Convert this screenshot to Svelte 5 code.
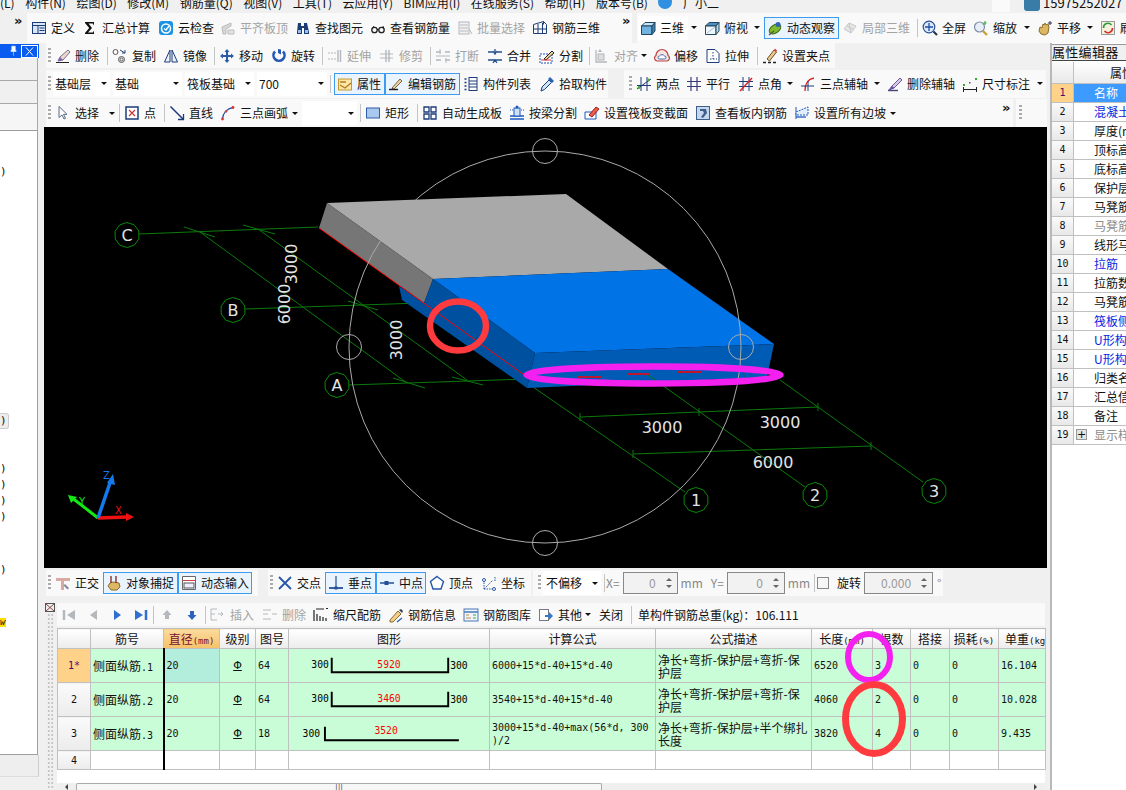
<script lang="ts">
	type Item = { i?: string; t?: string; w?: number; off?: boolean; drop?: boolean; on?: boolean; sep?: boolean; combo?: boolean; grip?: boolean };

	// toolbar entry helpers, w is the slot width of the button
	const b = (i: string, t: string, w: number, flags = ''): Item => ({
		i, t, w,
		off: flags.includes('g'),
		drop: flags.includes('d'),
		on: flags.includes('a')
	});
	const sep: Item = { sep: true };
	const grip: Item = { grip: true };
	const combo = (t: string, w: number): Item => ({ t, w, combo: true });

	const N = '#1c3c78';
	const G = '#b4b8bc';
	const icons: Record<string, string> = {
		define: `<rect x="1.5" y="2.5" width="13" height="11" fill="#d8e6f6" stroke="${N}"/><path d="M1.5 5.5h13M7 5.5v8M8.5 8h5M8.5 10.500h5" stroke="${N}" fill="none"/>`,
		sigma: `<path d="M3 2h9v3.500l-1.200-2H6.500l3.500 4.500-4 4.500h5l1-2V14H3v-1l4.200-5L3 3z" fill="#111"/>`,
		cloud: `<rect x="1" y="1" width="14" height="14" rx="3" fill="#1c92e4"/><circle cx="8" cy="8.500" r="4.500" fill="none" stroke="#fff" stroke-width="1.500"/><path d="M6 8.500l2 1.500 3-4" stroke="#fff" stroke-width="1.300" fill="none"/>`,
		flat: `<path d="M2 7l9-4v3l-5 3v5H3z" fill="#d6d8d8" stroke="#bbb"/><path d="M8 10h6v4H8z" fill="#e3e3e3" stroke="#bbb"/>`,
		binoc: `<path d="M3 3h3v3h3V3h3l2 9v2h-5V8H7v6H2v-2z" fill="${N}"/><rect x="3" y="10" width="3" height="3" fill="#9cc0ea"/><rect x="10" y="10" width="3" height="3" fill="#9cc0ea"/>`,
		glasses: `<circle cx="4.500" cy="10" r="2.700" fill="none" stroke="#222" stroke-width="1.300"/><circle cx="11.500" cy="10" r="2.700" fill="none" stroke="#222" stroke-width="1.300"/><path d="M7 9.500h2M2 9l2-3M14 9l-1-3" stroke="#222"/>`,
		batch: `<rect x="2" y="2" width="10" height="12" fill="#f2f2f2" stroke="${G}"/><path d="M3 5h8M3 8h8M3 11h8M12 9l3 5" stroke="${G}"/>`,
		rebar: `<path d="M1.500 4.500l10-3 3 3v9h-13zM1.500 9h13M6 4v10M10.500 3v11M11.500 1.500v3" fill="none" stroke="${N}"/>`,
		cube: `<path d="M1.500 6L5 2.500h10L12 6z" fill="#c8e2f5" stroke="#23465c"/><path d="M1.500 6H12v8.500H1.500z" fill="#70b2e0" stroke="#23465c"/><path d="M12 6l3-3.500v8.500L12 14.500z" fill="#3d86bb" stroke="#23465c"/>`,
		top: `<path d="M1.500 6L5 2.500h10L12 6z" fill="#4d8fc2" stroke="#23465c"/><path d="M1.500 6H12v8.500H1.500z" fill="#eef6fb" stroke="#23465c"/><path d="M12 6l3-3.500v8.500L12 14.500z" fill="#bcd9ea" stroke="#23465c"/><path d="M3 13l8-6" stroke="#9cc4de"/>`,
		orbit: `<ellipse cx="8" cy="9" rx="6.500" ry="4" fill="#7fba2c" stroke="#39701a" transform="rotate(-35 8 9)"/><circle cx="11" cy="4.500" r="2.500" fill="#2f62b8"/><path d="M2 15l5-4" stroke="#555" stroke-width="1.500"/>`,
		local: `<path d="M2 9l5-6 7 3-5 7z" fill="#e6e6e6" stroke="#c8c8c8"/><path d="M5 6l6 3M7 3l2 10" stroke="#c8c8c8"/>`,
		full: `<circle cx="7" cy="7" r="5.800" fill="#dce9f8" stroke="#2a4f94" stroke-width="1.200"/><path d="M7 3v8M3 7h8" stroke="#1d4fa8" stroke-width="1.300"/><path d="M11.500 11.500l3.500 3.500" stroke="#234" stroke-width="2"/>`,
		zoom: `<circle cx="6.500" cy="7" r="5" fill="#e8eef8" stroke="#7d8ea8" stroke-width="1.200"/><path d="M10 11l4 4" stroke="#c9a137" stroke-width="2.400"/><path d="M12 1v4M10.500 3h3" stroke="#3a3" />`,
		pan: `<path d="M2 11l1-4 2 1 1-4 1 1 1-2 1 2 2-1 1 3-1 6-3 2-4-1z" fill="#dcb865" stroke="#8a6c28"/><path d="M11 3h4M13 1v4" stroke="#334"/>`,
		refresh: `<rect x="1.500" y="1.500" width="13" height="13" fill="#f4f0dc" stroke="#999"/><path d="M3.500 8a4.500 4.500 0 0 1 8-3" fill="none" stroke="#2a9a3a" stroke-width="1.600"/><path d="M12.500 8a4.500 4.500 0 0 1-8 3" fill="none" stroke="#d4332a" stroke-width="1.600"/>`,
		erase: `<path d="M1 14.500h13" stroke="#222"/><path d="M3 13l2-4 8-7 2 2-7 8z" fill="#e9d9c7" stroke="#7a6a9a"/><path d="M3 13l2-4 3 3z" fill="#7863ac"/>`,
		copy: `<circle cx="3.500" cy="4" r="2.500" fill="none" stroke="#555"/><circle cx="9.500" cy="11.500" r="3" fill="none" stroke="#555"/><circle cx="9.500" cy="11.500" r="1.500" fill="none" stroke="#555"/><path d="M8 2l5 3M13 2v3h-3" fill="none" stroke="#27467e"/>`,
		mirror: `<path d="M7 2L1.500 14H7zM9 2l5.500 12H9z" fill="#eef3fa" stroke="${N}"/>`,
		move: `<path d="M8 1l2.500 3H9v3h3V5.500L15 8l-3 2.500V9H9v3h1.500L8 15l-2.500-3H7V9H4v1.500L1 8l3-2.500V7h3V4H5.500z" fill="#2a5ca8"/>`,
		rotate: `<path d="M4 3.500a5.500 5.500 0 1 0 8 0" fill="none" stroke="#2458b4" stroke-width="2.600"/><path d="M7 1l3 .5v5L7 5z" fill="#2458b4"/>`,
		extend: `<path d="M1 5h8M1 11h8" stroke="${G}" stroke-dasharray="2 1"/><path d="M11 2v12M13.500 2v12" stroke="${G}" stroke-width="1.400"/>`,
		trim: `<path d="M1 6h13M1 10h13" stroke="${G}"/><path d="M7 2v12M10 2v12" stroke="${G}" stroke-width="1.400"/>`,
		breaks: `<path d="M1 4h5M10 4h5M1 12h5M10 12h5" stroke="${G}" stroke-width="1.400"/><path d="M5 1v5M11 10v5M1 8h14" stroke="${G}"/>`,
		merge: `<path d="M1 4h5M10 4h5M1 12h14M8 1v5M6 3l2 3 2-3M6 15l2-3 2 3" stroke="#26508a" stroke-width="1.300" fill="none"/>`,
		split: `<path d="M1 6h12v9H1z" fill="#fff" stroke="#2050c0" stroke-dasharray="2 1"/><path d="M5 11l8-8 2 2-8 7z" fill="#e8cf9a" stroke="#222"/><path d="M2 12l10 0" stroke="#d33"/>`,
		align: `<path d="M2 2v12h11" fill="none" stroke="${G}" stroke-width="1.300"/><rect x="4" y="6" width="6" height="6" fill="#ddd" stroke="${G}"/><path d="M6 1l-2 3h4z" fill="${G}"/>`,
		offset: `<path d="M3 13a3 3 0 0 1-1-5.500 6 6 0 0 1 12 0 3 3 0 0 1-1 5.500z" fill="#f6e6e2" stroke="#b44" stroke-width="1.200"/><path d="M5.500 11a1.500 1.500 0 0 1 0-3 3 3 0 0 1 5 0 1.500 1.500 0 0 1 0 3z" fill="#fff" stroke="#46a"/>`,
		stretch: `<path d="M2 1.500h8l4 4v9H2z" fill="#fff" stroke="${N}"/><path d="M8 4v7M5 11h7" stroke="${N}" stroke-dasharray="1.500 1.500"/>`,
		pgrip: `<path d="M1 14.500h3M6 14.500h3M11 14.500h3" stroke="#222" stroke-width="1.400"/><path d="M5 11l7-9 2.500 2-7 9z" fill="#eac98a" stroke="#6a5030"/><path d="M12 2l2.500 2 .5-1.500-2-2z" fill="#d44"/>`,
		prop: `<rect x="1.500" y="3" width="13" height="11" fill="#fbe6a8" stroke="#c59a35"/><path d="M3 6h6M3 9l5 3 6-5" fill="none" stroke="#b8781a" stroke-width="1.300"/>`,
		edit: `<path d="M1 13.500h9" stroke="#111" stroke-width="1.400"/><path d="M4 12l8-9 2 2-8 8z" fill="#e9d5a9" stroke="#7a6040"/><path d="M4 12l-1 2 3-1z" fill="#335"/>`,
		list: `<path d="M1.500 3h2M1.500 6.500h2M1.500 10h2M1.500 13.500h2" stroke="${N}" stroke-width="1.400"/><rect x="6" y="1.500" width="8" height="13" fill="#fff" stroke="${N}"/><path d="M6 5h8M6 8h8M6 11h8" stroke="${N}"/>`,
		pick: `<path d="M2 15l1-4 7-7 2.500 2.500-7 7z" fill="#cfe3f6" stroke="${N}"/><path d="M9 3l2-2 4 4-2 2z" fill="#2a62b8"/>`,
		twopt: `<path d="M5 1v14M11 1v14M1 13L15 3" stroke="${N}"/><path d="M1 9.500h14" stroke="${N}"/><circle cx="3" cy="11.500" r="1.400" fill="#4a3"/><circle cx="12.500" cy="4" r="1.400" fill="#4a3"/>`,
		parallel: `<path d="M5 1v14M11 1v14M1 5.500h14M1 10.500h14" stroke="#3a3a7a" stroke-width="1.200"/>`,
		angle: `<path d="M5 1v14M11 1v14M1 5.500h14M1 10.500h14" stroke="${N}"/><path d="M2 15L14 2" stroke="#d22" stroke-width="1.400"/>`,
		arc3: `<path d="M5 15C5 7 8 3 14 2" fill="none" stroke="#d22" stroke-width="1.300"/><path d="M8 5v10M1 10h13" stroke="${N}"/>`,
		delaxis: `<path d="M1 14.500h10" stroke="#447" stroke-width="1.400"/><path d="M2 14l3-4 8-8 2 2-8 8z" fill="#d8c7e8" stroke="#6a5a9a"/><path d="M2 14l3-4 2.500 2z" fill="#6a4fa8"/>`,
		dim: `<path d="M1 13.500h14M1.500 11v5M14.500 11v5" stroke="#222"/><rect x="1" y="8" width="2" height="2" fill="#3a3"/><rect x="13" y="2" width="2" height="2" fill="#3a3"/><rect x="7" y="6" width="1.500" height="1.500" fill="#555"/>`,
		select: `<path d="M4 1.500v11l3-2.500 2 4 1.500-.7-2-4H12z" fill="#fff" stroke="#5a6a86"/>`,
		point: `<rect x="2" y="2" width="12" height="12" fill="#fff" stroke="${N}" stroke-width="1.500"/><path d="M5 5l6 6M11 5l-6 6" stroke="#c33" stroke-width="1.200"/>`,
		line: `<path d="M1.500 1.500L14 14" stroke="${N}" stroke-width="1.500"/><path d="M14.500 9v5.500H9" fill="none" stroke="${N}" stroke-width="1.300"/>`,
		arc: `<path d="M2.500 14C3 8 7 3.500 13 2.500" fill="none" stroke="#2050a8" stroke-width="1.300"/><circle cx="2.500" cy="14" r="1.400" fill="#d33"/><circle cx="13" cy="2.500" r="1.400" fill="#d33"/><circle cx="6" cy="6.500" r="1.200" fill="#d33"/>`,
		rect: `<rect x="1.500" y="3" width="13" height="10" fill="#a9c8f0" stroke="#2f5ca8"/>`,
		auto: `<path d="M2 2h5v5H2zM9 2h5v5H9zM2 9h5v5H2zM9 9h5v5H9z" fill="#fff" stroke="${N}" stroke-width="1.300"/>`,
		beam: `<path d="M1 11h14M1 14h14" stroke="#1c58c0" stroke-width="1.500"/><rect x="5" y="3" width="6" height="8" fill="#cfe0f8" stroke="#1c58c0"/><circle cx="8" cy="2" r="1.500" fill="#1c58c0"/><path d="M1 5h3M12 5h3" stroke="#1c58c0" stroke-dasharray="1 1"/>`,
		section: `<path d="M1 7h11v7H1z" fill="#fff" stroke="#1c58c0"/><path d="M5 10l7-8 3 2-7 8z" fill="#ec5a4a" stroke="#922"/>`,
		viewin: `<rect x="1.500" y="1.500" width="13" height="13" fill="#c6d8ee" stroke="#3d5f8e"/><path d="M5 4h6l1 4-4 5-2-1 3-4-1-2H5z" fill="#3d5f8e"/>`,
		slope: `<path d="M2 2v12" stroke="#1c58c0"/><path d="M2 7l12-5v8H2z" fill="#e4eefb" stroke="#1c58c0" stroke-dasharray="2 1"/><path d="M2 12h10" stroke="#1c58c0" stroke-width="1.300"/>`,
		ortho: `<path d="M1 3h14v3H9v9H6V6H1z" fill="#d9a9a4"/><path d="M10 9l4 4-1.500 1.500-4-4z" fill="#889"/>`,
		snap: `<path d="M2 11l2-3 3-1 6 1 1 4-3 3H5z" fill="#dcb865" stroke="#8a6c28"/><path d="M5 1v7M10 1v7" stroke="#8a3030" stroke-width="1.400"/>`,
		dyn: `<path d="M1.500 1.500h13v13h-13z" fill="#fff" stroke="#666"/><path d="M1.500 5.500h13" stroke="#c44"/><rect x="3" y="8" width="10" height="5" fill="#eef" stroke="#555"/>`,
		cross: `<path d="M2 2l12 12M14 2L2 14" stroke="#2458a8" stroke-width="1.800"/>`,
		perp: `<path d="M1 13h14" stroke="#244f98" stroke-width="1.800"/><path d="M8 1v12" stroke="#244f98" stroke-width="1.200"/><rect x="6.500" y="11.500" width="3" height="3" fill="#244f98"/>`,
		mid: `<path d="M1 8h14" stroke="#244f98" stroke-width="1.500"/><rect x="5.500" y="6" width="4" height="4" fill="#244f98"/>`,
		vertex: `<path d="M8 1.500l6.500 5-2.500 7.500H4L1.500 6.500z" fill="#fff" stroke="#2458a8" stroke-width="1.400"/>`,
		coord: `<path d="M3 14V6M3 14h9M3 14l9-9M14 2v5" stroke="#2458a8" stroke-dasharray="1.500 1"/><circle cx="3" cy="5" r="1.500" fill="#fff" stroke="#2458a8"/><circle cx="13" cy="14" r="1.500" fill="#fff" stroke="#2458a8"/>`,
		first: `<path d="M3 3v10" stroke="${G}" stroke-width="2.500"/><path d="M14 3v10L6 8z" fill="${G}"/>`,
		prev: `<path d="M12 3v10L5 8z" fill="${G}"/>`,
		next: `<path d="M5 3v10l7-5z" fill="#2e6fd0"/>`,
		last: `<path d="M2 3v10l8-5z" fill="#2e6fd0"/><path d="M13 3v10" stroke="#2e6fd0" stroke-width="2.500"/>`,
		up: `<path d="M8 3l4.500 5H10v4H6V8H3.500z" fill="${G}"/>`,
		down: `<path d="M8 13l4.500-5H10V4H6v4H3.500z" fill="#2e62c0"/>`,
		insert: `<path d="M1 2h6M1 7h4M1 13h6M1 2v11" stroke="${G}"/><path d="M8 7h5M11 5l2 2-2 2" fill="none" stroke="${G}"/>`,
		remove: `<path d="M1 3h8M1 7h5M1 12h8" stroke="${G}"/><path d="M10 7h5" stroke="${G}"/>`,
		scale: `<path d="M1 3v11M4 7v7M7 9v5M10 10v4M13 11v3" stroke="#222" stroke-width="1.200"/><path d="M3 2h8M13 1.500h2" stroke="#222"/>`,
		info: `<path d="M2 13l8-9 3 3-8 8H2z" fill="#f2cf88" stroke="#8a6a30"/><path d="M11 3l2-1 2 2-1 2z" fill="#345"/><path d="M9 15l5-4" stroke="#2a62b8" stroke-width="1.400"/>`,
		lib: `<rect x="1" y="2" width="14" height="12" fill="#eef4fb" stroke="#4878b8"/><path d="M1 5h14" stroke="#4878b8" stroke-width="1.500"/><path d="M3 8h3M3 11h5" stroke="#c84"/><path d="M10 8h3M10 11h3" stroke="#4a4"/>`,
		other: `<rect x="1.500" y="2.500" width="9" height="11" fill="#fff" stroke="#778"/><path d="M7 8h4V5l4 4-4 4v-3H7z" fill="#2e78d0"/>`
	};

	const row1a: Item[] = [
		b('define', '定义', 51), b('sigma', '汇总计算', 76), b('cloud', '云检查', 62), b('flat', '平齐板顶', 75, 'g'),
		b('binoc', '查找图元', 75), b('glasses', '查看钢筋量', 87), b('batch', '批量选择', 75, 'g'), b('rebar', '钢筋三维', 75)
	];
	const row1b: Item[] = [
		b('cube', '三维', 64, 'd'), b('top', '俯视', 63, 'd'), b('orbit', '动态观察', 75, 'a'), b('local', '局部三维', 78, 'g'), sep,
		b('full', '全屏', 51), b('zoom', '缩放', 64, 'd'), b('pan', '平移', 63, 'd'), b('refresh', '刷新', 29)
	];
	const row2: Item[] = [
		grip, b('erase', '删除', 55), sep, b('copy', '复制', 51), b('mirror', '镜像', 54), sep, b('move', '移动', 52), b('rotate', '旋转', 54), sep,
		b('extend', '延伸', 52, 'g'), b('trim', '修剪', 54, 'g'), sep, b('breaks', '打断', 52, 'g'), b('merge', '合并', 52), b('split', '分割', 53), sep,
		b('align', '对齐', 60, 'gd'), b('offset', '偏移', 51), b('stretch', '拉伸', 55), sep, b('pgrip', '设置夹点', 76)
	];
	const row3a: Item[] = [
		grip, combo('基础层', 57), combo('基础', 69), combo('筏板基础', 69), combo('700', 70), sep,
		b('prop', '属性', 51, 'a'), b('edit', '编辑钢筋', 75, 'a'), b('list', '构件列表', 76), b('pick', '拾取构件', 72)
	];
	const row3b: Item[] = [
		grip, b('twopt', '两点', 50), b('parallel', '平行', 52), b('angle', '点角', 62, 'd'), b('arc3', '三点辅轴', 87, 'd'),
		b('delaxis', '删除辅轴', 75), b('dim', '尺寸标注', 88, 'd')
	];
	const row4: Item[] = [
		grip, b('select', '选择', 67, 'd'), sep, b('point', '点', 43), sep, b('line', '直线', 51), b('arc', '三点画弧', 85, 'd'), combo('', 55), sep,
		b('rect', '矩形', 55), sep, b('auto', '自动生成板', 87), b('beam', '按梁分割', 75), b('section', '设置筏板变截面', 111),
		b('viewin', '查看板内钢筋', 99), b('slope', '设置所有边坡', 109, 'd')
	];
	const snapA: Item[] = [grip, b('ortho', '正交', 51), b('snap', '对象捕捉', 75, 'a'), b('dyn', '动态输入', 74, 'a')];
	const snapB: Item[] = [
		grip, b('cross', '交点', 51), b('perp', '垂点', 51, 'a'), b('mid', '中点', 50, 'a'), b('vertex', '顶点', 52), b('coord', '坐标', 52)
	];
	const nav: Item[] = [
		{ i: 'first', w: 24 }, { i: 'prev', w: 24 }, { i: 'next', w: 24 }, { i: 'last', w: 24 }, sep, { i: 'up', w: 23 }, { i: 'down', w: 27 }, sep,
		b('insert', '插入', 52, 'g'), b('remove', '删除', 51, 'g'), b('scale', '缩尺配筋', 75), b('info', '钢筋信息', 75), b('lib', '钢筋图库', 75),
		b('other', '其他', 60, 'd')
	];

	const menus = ['(L)', '构件(N)', '绘图(D)', '修改(M)', '钢筋量(Q)', '视图(V)', '工具(T)', '云应用(Y)', 'BIM应用(I)', '在线服务(S)', '帮助(H)', '版本号(B)'];

	const props = [
		['名称', ''], ['混凝土强度等级', 'l'], ['厚度(mm)', ''], ['顶标高(m)', ''], ['底标高(m)', ''], ['保护层厚度(mm)', ''], ['马凳筋参数图', ''],
		['马凳筋信息', 'g'], ['线形马凳筋方向', ''], ['拉筋', 'l'], ['拉筋数量计算方式', ''], ['马凳筋数量计算方式', ''], ['筏板侧面纵筋', 'l'],
		['U形构造封边钢筋', 'l'], ['U形构造封边钢筋弯折', 'l'], ['归类名称', ''], ['汇总信息', ''], ['备注', ''], ['显示样式', 'g']
	];

	const rows = [
		{ name: '1', diam: '20', no: '64', len: '5920', f: ['6000+15*d-40+15*d-40'], d: ['净长+弯折-保护层+弯折-保', '护层'], total: '6520', n: '3', w: '16.104' },
		{ name: '2', diam: '20', no: '64', len: '3460', f: ['3540+15*d-40+15*d-40'], d: ['净长+弯折-保护层+弯折-保', '护层'], total: '4060', n: '2', w: '10.028' },
		{ name: '3', diam: '20', no: '18', len: '3520', f: ['3000+15*d-40+max(56*d, 300', ')/2'], d: ['净长+弯折-保护层+半个绑扎', '长度'], total: '3820', n: '4', w: '9.435' }
	];

	// little 10-sided bubble for the axis labels
	function ngon(cx: number, cy: number, r: number) {
		return Array.from({ length: 10 }, (_, k) => {
			const a = (k * Math.PI) / 5 + 0.3;
			return `${(cx + r * Math.cos(a)).toFixed(1)},${(cy + r * Math.sin(a)).toFixed(1)}`;
		}).join(' ');
	}
	const bubbles = [
		['C', 127, 235], ['B', 233, 310], ['A', 337, 385], ['1', 696, 500], ['2', 815, 495], ['3', 934, 491]
	] as [string, number, number][];
	const greenLines = [
		[139, 234, 318, 227], [184, 227, 215, 237], [243, 225, 275, 234], [200, 232, 407, 383], [393, 378, 425, 388],
		[258, 229, 467, 380], [348, 301, 378, 310], [452, 377, 483, 385], [245, 309, 420, 303], [349, 385, 527, 379],
		[580, 417, 818, 407], [633, 454, 871, 446], [520, 378, 685, 492], [780, 380, 923, 482],
		[580, 413, 580, 421], [699, 408, 699, 416], [818, 403, 818, 411], [633, 450, 633, 458], [871, 442, 871, 450]
	];
</script>

{#snippet tool(it: Item)}
	{#if it.sep}
		<span class="sep"></span>
	{:else if it.grip}
		<span class="grip"></span>
	{:else if it.combo}
		<span class="combo" style:width="{it.w}px"><span class="combo-t">{it.t}</span><i class="arrow"></i></span>
	{:else}
		<span class="it" class:on={it.on} class:off={it.off} class:solo={!it.t} style:width="{it.w}px">
			{#if it.i}<svg class="ic" viewBox="0 0 16 16">{@html icons[it.i]}</svg>{/if}
			{#if it.t}<span>{it.t}</span>{/if}
			{#if it.drop}<i class="arrow"></i>{/if}
		</span>
	{/if}
{/snippet}

{#snippet spin(value: string, w: string)}
	<span class="spin {w}"><span class="spin-v">{value}</span><span class="spin-b"><i class="up"></i><i class="dn"></i></span></span>
{/snippet}

<div class="app">
	<div class="menu">
		<div class="menu-in">
			{#each menus as m}<span>{m}</span>{/each}
			<span class="robot"></span>
			<span>广小二</span>
			<span class="chip"></span>
			<span class="user-ic"></span>
			<span class="phone">15975252027</span>
		</div>
	</div>

	<div class="top">
		<span class="more first-more">»</span>
		<div class="bar t1">
			{#each row1a as it}{@render tool(it)}{/each}
		</div>
		<span class="more mid-more">»</span>
		<div class="bar t2">
			<span class="white-back"></span>
			{#each row1b as it}{@render tool(it)}{/each}
		</div>
	</div>

	<div class="main">
		<aside class="left">
			<div class="pane-title">
				<svg class="pin" viewBox="0 0 8 12"><path d="M2 1h4v5h1v1H1V6h1zM4 7v5" fill="#fff" stroke="#fff" stroke-width=".6"/></svg>
				<span class="pane-x"><svg viewBox="0 0 15 11"><path d="M4 1.500l7 8M11 1.500l-7 8" stroke="#fff"/></svg></span>
			</div>
			<div class="pane-row"></div>
			<div class="pane-row"></div>
			<div class="pane-gap"></div>
			<div class="tree">
				<div class="tree-line t-a">)</div>
				<div class="tree-line boxed"><span>)</span></div>
				<div class="tree-line t-b">)</div>
				<div class="tree-line">)</div>
				<div class="tree-line">)</div>
				<div class="tree-line">)</div>
				<div class="tree-line t-c">)</div>
				<div class="tree-line t-d"><span class="flag">w</span></div>
			</div>
			<div class="pane-foot"></div>
		</aside>

		<section class="center">
			<div class="bar r2">
				{#each row2 as it}{@render tool(it)}{/each}
			</div>
			<div class="split r3">
				<div class="bar r3a">{#each row3a as it}{@render tool(it)}{/each}</div>
				<div class="bar r3b">{#each row3b as it}{@render tool(it)}{/each}</div>
			</div>
			<div class="split r4">
				<div class="bar r4a">
					{#each row4 as it}{@render tool(it)}{/each}
					<span class="more end-more">»</span>
				</div>
				<div class="bar r4b"><span class="grip"></span></div>
			</div>

			<svg class="scene" viewBox="44 127 1003 441">
				{#each greenLines as l}
					<line x1={l[0]} y1={l[1]} x2={l[2]} y2={l[3]} stroke="#0b7a0b" />
				{/each}

				<polygon points="327,203 566,194 668,269 433,279" fill="#a9a9a9" />
				<polygon points="327,203 319,228 424,303 433,279" fill="#767676" />
				<polygon points="433,279 668,269 774,344 535,353" fill="#0073e6" />
				<polygon points="433,279 535,353 527,388 402,300 399,286 424,303" fill="#0050a0" />
				<polygon points="535,353 774,344 767,377 527,388" fill="#005bb5" />
				<line x1="319" y1="228" x2="527" y2="377" stroke="#f00" />
				<path d="M577 377h24M628 374h22M678 372h24" stroke="#f00" stroke-width="1.500" />
				<line x1="648" y1="375" x2="805" y2="487" stroke="#0b7a0b" />

				<g fill="none" stroke="#aaa">
					<circle cx="545" cy="347" r="196" />
					<circle cx="545" cy="151" r="12.500" />
					<circle cx="545" cy="543" r="12.500" />
					<circle cx="349" cy="347" r="12.500" />
					<circle cx="741" cy="347" r="12.500" />
				</g>

				{#each bubbles as [t, x, y]}
					<polygon points={ngon(x, y, 12.5)} fill="#000" stroke="#0b8a0b" />
					<text {x} y={y + 6} class="lbl">{t}</text>
				{/each}
				<text x="662" y="433" class="lbl">3000</text>
				<text x="780" y="428" class="lbl">3000</text>
				<text x="773" y="468" class="lbl">6000</text>
				<text class="lbl" transform="translate(297 264) rotate(-90)">3000</text>
				<text class="lbl" transform="translate(290 304) rotate(-90)">6000</text>
				<text class="lbl" transform="translate(402 340) rotate(-90)">3000</text>

				<ellipse cx="458" cy="326" rx="28" ry="24.500" fill="none" stroke="#ff3b3f" stroke-width="6.500" />
				<ellipse cx="653.500" cy="375" rx="127" ry="8.500" fill="none" stroke="#f420f0" stroke-width="6.500" />

				<path d="M98 518L71 497" stroke="#12e812" stroke-width="3" />
				<path d="M68 495l9 2-6 6z" fill="#12e812" />
				<path d="M98 518L127 517" stroke="#f01010" stroke-width="3.500" />
				<path d="M134 517l-8-4v8z" fill="#f01010" />
				<path d="M98 518L111 480" stroke="#1478ee" stroke-width="3.500" />
				<path d="M113 474l-6 9 8 2z" fill="#1478ee" />
				<text x="103" y="479" class="axis" fill="#1478ee">Z</text>
				<text x="79" y="505" class="axis" fill="#12e812">Y</text>
				<text x="115" y="514" class="axis" fill="#f01010">X</text>
			</svg>

			<div class="split snap">
				<div class="bar s-a">{#each snapA as it}{@render tool(it)}{/each}</div>
				<div class="bar s-b">{#each snapB as it}{@render tool(it)}{/each}</div>
				<div class="bar s-c">
					<span class="grip"></span>
					<span class="combo offset-combo"><span class="combo-t">不偏移</span><i class="arrow"></i></span>
					<span class="sep"></span>
					<span class="lab off">X=</span>
					{@render spin('0', 'sp-x')}
					<span class="lab off">mm</span>
					<span class="lab off y-lab">Y=</span>
					{@render spin('0', 'sp-y')}
					<span class="lab off mm2">mm</span>
					<span class="sep"></span>
					<span class="check"></span>
					<span class="lab rot">旋转</span>
					{@render spin('0.000', 'sp-r')}
					<span class="lab off deg">°</span>
				</div>
			</div>

			<div class="lower">
				<div class="side">
					<svg class="side-x" viewBox="0 0 10 9"><rect x=".5" y=".5" width="9" height="8" fill="#eee" stroke="#555"/><path d="M1 1l8 7M9 1L1 8" stroke="#844"/></svg>
					<div class="side-dots"></div>
				</div>
				<div class="panel">
					<div class="bar nav">
						{#each nav as it}{@render tool(it)}{/each}
						<span class="lab close">关闭</span>
						<span class="sep"></span>
						<span class="lab total">单构件钢筋总重(kg)：106.111</span>
					</div>

					<div class="grid-wrap">
						<table class="grid">
							<colgroup>
								{#each [33, 73, 56, 36, 33, 201, 166, 156, 61, 38, 39, 49, 47] as w}<col style:width="{w}px" />{/each}
							</colgroup>
							<thead>
								<tr>
									<th></th><th>筋号</th><th class="hot">直径<small>(mm)</small></th><th>级别</th><th>图号</th><th>图形</th><th>计算公式</th><th>公式描述</th>
									<th>长度<small>(mm)</small></th><th>根数</th><th>搭接</th><th>损耗<small>(%)</small></th><th class="clip">单重<small>(kg)</small></th>
								</tr>
							</thead>
							<tbody>
								{#each rows as r, i}
									<tr class="data">
										<th class="num" class:cur={i === 0}>{r.name}{i === 0 ? '*' : ''}</th>
										<td>侧面纵筋<span class="m">.{r.name}</span></td>
										<td class="m bar-l" class:sel={i === 0}>{r.diam}</td>
										<td class="grade">Φ</td>
										<td class="m">{r.no}</td>
										<td class="shape">
											{#if i < 2}
												<svg viewBox="0 0 200 34">
													<text x="20" y="20">300</text>
													<path d="M41 9v15h120V9" />
													<text x="100" y="20" class="red" text-anchor="middle">{r.len}</text>
													<text x="163" y="21">300</text>
												</svg>
											{:else}
												<svg viewBox="0 0 200 34">
													<text x="11" y="21">300</text>
													<path d="M34 10v14h138" />
													<text x="97" y="17" class="red" text-anchor="middle">{r.len}</text>
												</svg>
											{/if}
										</td>
										<td class="m lines">{#each r.f as l}<div>{l}</div>{/each}</td>
										<td class="lines desc">{#each r.d as l}<div>{l}</div>{/each}</td>
										<td class="m">{r.total}</td>
										<td class="m">{r.n}</td>
										<td class="m">0</td>
										<td class="m">0</td>
										<td class="m">{r.w}</td>
									</tr>
								{/each}
								<tr class="blank">
									<th class="num">4</th><td></td><td class="bar-l"></td><td></td><td></td><td></td><td></td><td></td><td></td><td></td><td></td><td></td><td></td>
								</tr>
							</tbody>
						</table>
						<svg class="marks" viewBox="0 0 988 160">
							<ellipse cx="812" cy="29" rx="21" ry="23" stroke="#f420f0" stroke-width="6" />
							<ellipse cx="817" cy="91" rx="28.500" ry="34.500" stroke="#ff3b3f" stroke-width="7" />
						</svg>
					</div>

					<div class="hscroll">
						<span class="sc-btn"><i class="sc-l"></i></span>
						<span class="sc-thumb">|||</span>
						<i class="sc-r"></i>
					</div>
				</div>
			</div>
		</section>

		<aside class="right">
			<div class="pe-title">属性编辑器</div>
			<div class="pe">
				<div class="pe-row pe-head"><span class="pe-n"></span><span class="pe-l">属性名称</span></div>
				{#each props as p, i}
					<div class="pe-row">
						<span class="pe-n" class:cur={i === 0}>{i + 1}</span>
						<span class="pe-l" class:sel={i === 0} class:link={p[1] === 'l'} class:dim={p[1] === 'g'}>
							{#if i === 18}<i class="plus">+</i>{/if}{p[0]}
						</span>
					</div>
				{/each}
			</div>
		</aside>
	</div>
</div>

<style>
	:global(body) {
		background: #f0f0f0;
	}
	.app {
		width: 1126px;
		height: 790px;
		overflow: hidden;
		background: #f0f0f0;
		font: 12px/16px "Noto Sans CJK SC", "Liberation Sans", sans-serif;
		color: #111;
	}

	.menu {
		height: 13px;
		overflow: hidden;
		white-space: nowrap;
	}
	.menu-in {
		display: flex;
		align-items: center;
		gap: 10.5px;
		margin-top: -6px;
		height: 18px;
	}
	.robot {
		flex: none;
		width: 14px;
		height: 14px;
		border-radius: 50%;
		background: #2f8fe0;
		margin-top: -2px;
	}
	.chip {
		flex: none;
		width: 18px;
		height: 18px;
		background: #fafafa;
		margin-left: auto;
	}
	.user-ic {
		flex: none;
		width: 16px;
		height: 16px;
		background: #3a7ca8;
		border-radius: 3px;
		margin-left: 3px;
	}
	.phone {
		flex: none;
		width: 83px;
		margin-left: -7px;
		font-size: 13px;
	}

	.top {
		display: flex;
		height: 30px;
	}
	.more {
		font: bold 13px/14px "DejaVu Sans", sans-serif;
		color: #111;
	}
	.first-more {
		width: 27px;
		padding: 1px 0 0 14px;
		box-sizing: border-box;
	}
	.mid-more {
		position: relative;
		width: 0;
		left: -15px;
		top: 1px;
	}

	.bar {
		display: flex;
		align-items: center;
		background: #f9f9f9;
		white-space: nowrap;
	}
	.t1 {
		width: 605px;
		padding-left: 1px;
		padding-bottom: 1px;
		margin-right: 5px;
		box-sizing: border-box;
	}
	.t2 {
		width: 489px;
		padding-bottom: 1px;
		box-sizing: border-box;
		position: relative;
	}
	.white-back {
		position: absolute;
		left: 1px;
		top: 3px;
		width: 50px;
		height: 24px;
		background: #fff;
	}

	.it {
		position: relative;
		display: flex;
		align-items: center;
		flex: none;
		height: 22px;
		padding-left: 3px;
		box-sizing: border-box;
	}
	.it.on {
		padding-left: 2px;
		border: 1px solid #3d9bf0;
		background: #e9f4ff;
	}
	.it.off {
		color: #a3a3a3;
	}
	.it.solo {
		justify-content: center;
		padding-left: 0;
	}
	.it.solo .ic {
		margin-right: 0;
	}
	.ic {
		flex: none;
		width: 16px;
		height: 16px;
		margin-right: 4px;
	}
	.arrow {
		width: 0;
		height: 0;
		margin-left: auto;
		margin-right: 4px;
		border: 3px solid transparent;
		border-top: 3px solid #111;
		border-bottom: 0;
	}
	.sep {
		flex: none;
		width: 2px;
		height: 18px;
		box-sizing: border-box;
		border-left: 1px solid #c4c4c4;
	}
	.grip {
		flex: none;
		width: 6px;
		height: 16px;
		box-sizing: border-box;
		border-left: 2px solid transparent;
		border-right: 1px solid transparent;
		background: repeating-linear-gradient(#aaa 0 2px, transparent 2px 4px) content-box;
	}
	.combo {
		flex: none;
		display: flex;
		align-items: center;
		height: 24px;
		margin-right: 3px;
		padding-left: 2px;
		box-sizing: border-box;
		background: #fff;
	}
	.combo-t {
		flex: 1;
	}
	.combo .arrow {
		margin-right: 3px;
	}

	.main {
		display: flex;
		height: 747px;
	}

	.left {
		flex: none;
		width: 44px;
		display: flex;
		flex-direction: column;
	}
	.pane-title {
		flex: none;
		width: 39px;
		height: 14px;
		margin-top: 1px;
		background: #0a5cf0;
		position: relative;
	}
	.pin {
		position: absolute;
		left: 10px;
		top: 1px;
		width: 7px;
		height: 11px;
	}
	.pane-x {
		position: absolute;
		right: 1px;
		top: 1px;
		width: 15px;
		height: 11px;
		border: 1px solid #fff;
		box-sizing: content-box;
		display: flex;
	}
	.pane-row {
		flex: none;
		width: 37px;
		height: 22px;
		border-bottom: 1px solid #a8a8a8;
		border-right: 1px solid #a8a8a8;
	}
	.pane-gap {
		flex: none;
		width: 37px;
		height: 26px;
		background: #f6f6f6;
		border-right: 1px solid #a8a8a8;
		border-bottom: 1px solid #9a9a9a;
	}
	.tree {
		flex: none;
		width: 37px;
		height: 623px;
		background: #fff;
		border-right: 1px solid #a0a0a0;
		border-bottom: 1px solid #a0a0a0;
		overflow: hidden;
		font: 11px/16px "DejaVu Sans Mono", monospace;
	}
	.tree-line {
		height: 16px;
	}
	.t-a {
		margin-top: 33px;
	}
	.boxed {
		margin-top: 233px;
	}
	.boxed span {
		display: block;
		width: 9px;
		height: 16px;
		background: #eee;
		border: 1px solid #ccc;
		border-left: 0;
		border-radius: 0 3px 3px 0;
		box-sizing: border-box;
		line-height: 14px;
	}
	.t-b {
		margin-top: 32px;
	}
	.t-c {
		margin-top: 37px;
	}
	.t-d {
		margin-top: 40px;
	}
	.flag {
		display: block;
		width: 6px;
		height: 9px;
		line-height: 8px;
		background: #fd0;
		font-size: 9px;
		font-style: italic;
	}
	.pane-foot {
		flex: none;
		width: 38px;
		height: 21px;
		border-bottom: 1px solid #ddd;
		background: #eee;
		border-right: 1px solid #ccc;
	}

	.center {
		flex: none;
		width: 1006px;
		display: flex;
		flex-direction: column;
	}
	.center > * {
		flex: none;
	}
	.r2 {
		width: 789px;
		height: 25px;
		margin-left: 2px;
		margin-bottom: 2px;
	}
	.split {
		display: flex;
		margin-left: 2px;
	}
	.r3 {
		height: 28px;
		margin-bottom: 1px;
		gap: 16px;
	}
	.r3a {
		width: 562px;
		padding-bottom: 1px;
		box-sizing: border-box;
	}
	.r3b {
		width: 422px;
		box-sizing: border-box;
		padding: 0 0 1px 3px;
	}
	.r3a :global(.grip) {
		margin-right: 1px;
	}
	.r3a :global(.sep) {
		margin-right: 2px;
	}
	.r4 {
		height: 28px;
		gap: 3px;
	}
	.r4a {
		width: 967px;
		position: relative;
	}
	.end-more {
		position: absolute;
		left: 956px;
		top: 2px;
	}
	.r4b {
		width: 30px;
		padding-left: 1px;
	}
	.scene {
		display: block;
		width: 1003px;
		height: 441px;
		background: #000;
	}
	.lbl {
		font: 16px "DejaVu Sans", sans-serif;
		fill: #e4e4e4;
		text-anchor: middle;
	}
	.axis {
		font: 10px "DejaVu Sans", sans-serif;
	}

	.snap {
		height: 26px;
		margin-top: 2px;
	}
	.s-a {
		width: 212px;
		margin-right: 10px;
	}
	.s-b {
		width: 263px;
	}
	.s-c {
		width: 410px;
		margin-left: 2px;
		box-sizing: border-box;
		padding-left: 3px;
	}
	.offset-combo {
		width: 58px;
		margin-left: 1px;
		margin-right: 3px;
		padding-left: 3px;
	}
	.lab {
		flex: none;
	}
	.lab.off {
		color: #888;
	}
	.spin {
		flex: none;
		display: flex;
		align-items: center;
		height: 22px;
		box-sizing: border-box;
		border: 1px solid #888;
		margin: 0 3px;
		background: #f2f2f2;
		color: #999;
	}
	.spin-v {
		flex: 1;
		text-align: right;
		padding-right: 8px;
	}
	.spin-b {
		display: flex;
		flex-direction: column;
		gap: 4px;
		width: 13px;
	}
	.spin-b i {
		width: 0;
		height: 0;
		border: 3px solid transparent;
		margin-left: 2px;
	}
	.spin-b .up {
		border-top: 0;
		border-bottom: 3px solid #666;
	}
	.spin-b .dn {
		border-bottom: 0;
		border-top: 3px solid #666;
	}
	.sp-x {
		width: 55px;
	}
	.sp-y {
		width: 58px;
	}
	.sp-r {
		width: 69px;
	}
	.y-lab {
		margin-left: 8px;
	}
	.mm2 {
		margin-right: 4px;
	}
	.check {
		flex: none;
		width: 10px;
		height: 10px;
		border: 1px solid #888;
		margin: 0 8px 0 1px;
		background: #f6f6f6;
	}
	.deg {
		margin-left: 1px;
	}

	.lower {
		display: flex;
		height: 187px;
		margin-top: 7px;
	}
	.side {
		flex: none;
		width: 13px;
	}
	.side-x {
		display: block;
		width: 10px;
		height: 9px;
		margin-left: 1px;
	}
	.side-dots {
		width: 7px;
		height: 178px;
		margin: 1px 0 0 3px;
		background: radial-gradient(circle, #c4c4c4 1px, transparent 1.200px) 0 0 / 3.500px 4px;
	}
	.panel {
		flex: none;
		width: 988px;
	}
	.nav {
		height: 23px;
		margin-bottom: 2px;
	}
	.close {
		margin-left: 4px;
		width: 32px;
	}
	.total {
		margin-left: 5px;
	}

	.grid-wrap {
		position: relative;
		height: 155px;
		background: #fff;
	}
	.grid {
		table-layout: fixed;
		width: 988px;
		border-collapse: collapse;
		font-size: 12px;
		line-height: 13px;
	}
	.grid th,
	.grid td {
		border: 1px solid #c0c0c0;
		padding: 0;
		overflow: hidden;
		white-space: nowrap;
		font-weight: 400;
	}
	.grid thead tr {
		height: 20px;
	}
	.grid thead th {
		background: linear-gradient(#fff, #ececec);
		text-align: center;
	}
	.grid small {
		font: 9px "DejaVu Sans Mono", monospace;
	}
	.grid thead .hot {
		background: linear-gradient(#fbdb9d, #f5c168);
		color: #7a1030;
	}
	.grid thead .clip {
		text-align: left;
		padding-left: 6px;
	}
	.data {
		height: 34px;
	}
	.data td {
		background: #c9fdd7;
		padding-left: 2px;
	}
	.blank {
		height: 19px;
	}
	.grid .num {
		background: linear-gradient(#fafafa, #ececec);
		text-align: center;
		font: 10px "DejaVu Sans Mono", monospace;
	}
	.grid .num.cur {
		background: #ffd28a;
		color: #4c0a6a;
	}
	.grid td.sel {
		background: #b3eedd;
	}
	.grid .bar-l {
		border-left: 2px solid #000;
	}
	.m {
		font: 10px "DejaVu Sans Mono", monospace;
	}
	.grid td.grade {
		text-align: center;
		padding: 0;
		font: 11px "DejaVu Sans", sans-serif;
		text-decoration: underline;
	}
	.lines {
		line-height: 13px;
	}
	.desc {
		font-size: 12px;
	}
	.grid td.shape {
		padding: 0;
	}
	.shape svg {
		display: block;
		width: 200px;
		height: 33px;
		font: 10px "DejaVu Sans Mono", monospace;
	}
	.shape path {
		fill: none;
		stroke: #000;
		stroke-width: 2;
	}
	.shape .red {
		fill: #f00;
	}
	.marks {
		position: absolute;
		left: 0;
		top: 0;
		width: 988px;
		height: 160px;
		fill: none;
		pointer-events: none;
	}
	.hscroll {
		position: relative;
		display: flex;
		align-items: center;
		height: 7px;
		background: #efefef;
	}
	.sc-btn {
		flex: none;
		width: 19px;
		height: 7px;
		display: flex;
		align-items: center;
		justify-content: center;
	}
	.sc-l {
		width: 0;
		height: 0;
		border: 3px solid transparent;
		border-right: 3px solid #444;
		border-left: 0;
	}
	.sc-thumb {
		flex: none;
		width: 526px;
		height: 7px;
		box-sizing: border-box;
		border: 1px solid #aaa;
		border-bottom: 0;
		border-radius: 2px 2px 0 0;
		background: #f7f7f7;
		text-align: center;
		overflow: hidden;
		font: 8px/8px "DejaVu Sans", sans-serif;
		color: #555;
	}
	.sc-r {
		position: absolute;
		right: 8px;
		top: 1px;
		width: 0;
		height: 0;
		border: 3px solid transparent;
		border-left: 3px solid #444;
		border-right: 0;
	}

	.right {
		flex: none;
		width: 76px;
		background: #fff;
		border-left: 2px solid #b8b8b8;
		box-sizing: border-box;
		overflow: hidden;
	}
	.pe-title {
		height: 15px;
		margin-top: 1px;
		font-size: 13px;
		line-height: 14px;
		letter-spacing: 0.3px;
		white-space: nowrap;
		background: #f0f0f0;
		border-bottom: 1px solid #444;
		border-top: 1px solid #999;
	}
	.pe {
		margin-top: 1px;
	}
	.pe-row {
		display: flex;
		height: 19px;
		box-sizing: border-box;
		border-bottom: 1px solid #c0c0c0;
		white-space: nowrap;
	}
	.pe-head {
		height: 22px;
		background: linear-gradient(#fff, #ececec);
	}
	.pe-n {
		flex: none;
		width: 21px;
		background: linear-gradient(#fafafa, #e8e8e8);
		border-right: 1px solid #c0c0c0;
		text-align: center;
		font: 10px/18px "DejaVu Sans Mono", monospace;
	}
	.pe-n.cur {
		background: #ffd28a;
		color: #4c0a6a;
	}
	.pe-l {
		flex: 1;
		min-width: 0;
		padding-left: 20px;
		line-height: 18px;
		overflow: hidden;
		position: relative;
	}
	.pe-head .pe-l {
		padding-left: 36px;
		line-height: 21px;
	}
	.pe-l.sel {
		background: #3d9bff;
		color: #fff;
	}
	.pe-l.link {
		color: #0a1fe0;
	}
	.pe-l.dim {
		color: #8c8c8c;
	}
	.plus {
		position: absolute;
		left: 2px;
		top: 3px;
		width: 11px;
		height: 11px;
		border: 1px solid #999;
		background: #e4e4e4;
		color: #111;
		font: 11px/10px "DejaVu Sans", sans-serif;
		text-align: center;
		box-sizing: border-box;
	}
</style>
